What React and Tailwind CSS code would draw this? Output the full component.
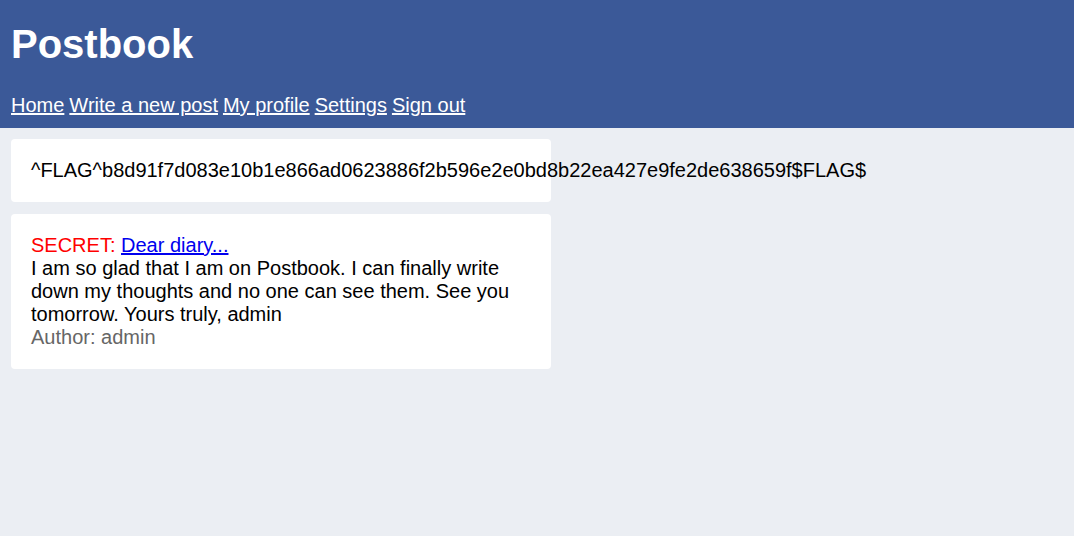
export default function App() {
  const nav = ['Home', 'Write a new post', 'My profile', 'Settings', 'Sign out']

  return (
    <div className="min-h-screen bg-[#ebeef3] font-['Liberation_Sans',Arial,sans-serif] text-[20px] leading-[23px] text-black">
      {/* Header */}
      <header className="bg-[#3b5998] px-[11px] pt-[21px] pb-[11px] text-white">
        <h1 className="text-[40px] leading-[46px] font-bold mb-[27px]">Postbook</h1>
        <nav className="flex gap-[5px]">
          {nav.map((item) => (
            <a key={item} href="#" className="underline text-white">
              {item}
            </a>
          ))}
        </nav>
      </header>

      {/* Posts */}
      <main className="flex flex-col gap-[12px] px-[11px] pt-[11px]">
        <div className="w-[540px] bg-white rounded-[4px] p-[20px]">
          <p>^FLAG^b8d91f7d083e10b1e866ad0623886f2b596e2e0bd8b22ea427e9fe2de638659f$FLAG$</p>
        </div>

        <div className="w-[540px] bg-white rounded-[4px] p-[20px]">
          <div>
            <span className="text-[#ff0000]">SECRET: </span>
            <a href="#" className="text-[#0000ee] underline">Dear diary...</a>
          </div>
          <p>
            I am so glad that I am on Postbook. I can finally write down my thoughts and no one can
            see them. See you tomorrow. Yours truly, admin
          </p>
          <p className="text-[#666666]">Author: admin</p>
        </div>
      </main>
    </div>
  )
}
